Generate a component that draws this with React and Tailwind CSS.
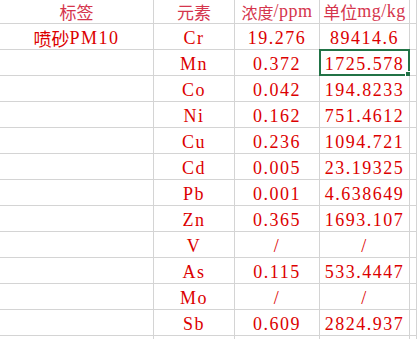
import React from 'react';

const rows = [
  { label: '喷砂', tag: 'PM10', el: 'Cr', ppm: '19.276', mg: '89414.6' },
  { el: 'Mn', ppm: '0.372', mg: '1725.578', selected: true },
  { el: 'Co', ppm: '0.042', mg: '194.8233' },
  { el: 'Ni', ppm: '0.162', mg: '751.4612' },
  { el: 'Cu', ppm: '0.236', mg: '1094.721' },
  { el: 'Cd', ppm: '0.005', mg: '23.19325' },
  { el: 'Pb', ppm: '0.001', mg: '4.638649' },
  { el: 'Zn', ppm: '0.365', mg: '1693.107' },
  { el: 'V', ppm: '/', mg: '/' },
  { el: 'As', ppm: '0.115', mg: '533.4447' },
  { el: 'Mo', ppm: '/', mg: '/' },
  { el: 'Sb', ppm: '0.609', mg: '2824.937' },
  { el: '', ppm: '', mg: '' }
];

const cell = 'relative flex items-center justify-center border-r border-b border-[#d4d4d4] whitespace-nowrap';
const cjk = 'tracking-normal font-["Noto_Sans_CJK_SC",sans-serif]';

export default function App() {
  return (
    <div className="w-[417px] h-[339px] overflow-hidden bg-white text-[#dc0000] text-[18px] tracking-[1.5px] font-['Liberation_Serif',serif]">
      <div className="grid grid-cols-[154px_81px_85px_90px_1fr] grid-rows-[24px] auto-rows-[26px]">
        {/* header row */}
        <div className={`${cell} text-[#d5354d]`}><span className={`${cjk} text-[17px]`}>标签</span></div>
        <div className={`${cell} text-[#d5354d]`}><span className={`${cjk} text-[17px]`}>元素</span></div>
        <div className={`${cell} text-[#d5354d] tracking-[0.5px]`}><span className={`${cjk} text-[16px]`}>浓度</span><span>/ppm</span></div>
        <div className={`${cell} text-[#d5354d] tracking-[0.5px]`}><span className={`${cjk} text-[17px]`}>单位</span><span>mg/kg</span></div>
        <div className={cell}></div>

        {rows.map((r, i) => (
          <React.Fragment key={i}>
            <div className={`${cell} pt-[3px]`}>
              {r.label && <><span className={`${cjk} text-[18px]`}>{r.label}</span><span>{r.tag}</span></>}
            </div>
            <div className={`${cell} pt-[3px]`}>{r.el}</div>
            <div className={`${cell} pt-[3px]`}>{r.ppm}</div>
            <div className={`${cell} pt-[3px]`}>
              {r.mg}
              {r.selected && (
                <div className="absolute -inset-[1px] border-2 border-[#217346]">
                  <div className="absolute -right-[3px] -bottom-[3px] w-[6px] h-[6px] bg-[#217346] border border-white" />
                </div>
              )}
            </div>
            <div className={cell}></div>
          </React.Fragment>
        ))}
      </div>
    </div>
  );
}
